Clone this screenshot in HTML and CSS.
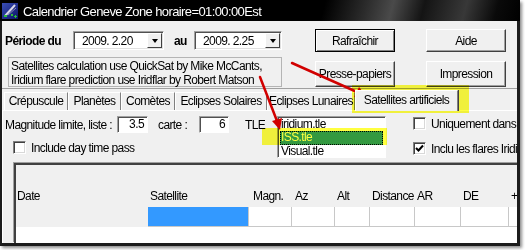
FILE: index.html
```html
<!DOCTYPE html>
<html lang="fr">
<head>
    <meta charset="UTF-8">
    <title>Calendrier Geneve</title>
    <link rel="stylesheet" href="styles.css">
</head>
<body>
<div class="shot">
    <div class="window">
        <div class="titlebar">
            <svg class="appicon" width="16" height="16" viewBox="0 0 16 16">
                <defs>
                    <linearGradient id="sky" x1="0" y1="0" x2="1" y2="1">
                        <stop offset="0" stop-color="#3a4fb8"/>
                        <stop offset="1" stop-color="#0c1466"/>
                    </linearGradient>
                </defs>
                <rect width="16" height="16" fill="url(#sky)"/>
                <path d="M3 13 L13 2" stroke="#d8d8e8" stroke-width="2"/>
                <path d="M6 12 L14 5" stroke="#8a8ab0" stroke-width="1"/>
                <rect x="2" y="12" width="3" height="2" fill="#2fbf3a"/>
                <rect x="9" y="11" width="2" height="2" fill="#2fbf3a"/>
                <rect x="12" y="13" width="3" height="1" fill="#2fbf3a"/>
                <rect x="13" y="12" width="1" height="3" fill="#2fbf3a"/>
            </svg>
            <span class="title">Calendrier Geneve Zone horaire=01:00:00Est</span>
        </div>
        <div class="client">
            <!-- période et boutons -->
            <div class="top">
                <div class="period">
                    <span class="lbl-bold period-lbl">Période du</span>
                    <div class="combo combo-from"><span class="combo-text">2009. 2.20</span><span class="drop"></span></div>
                    <span class="lbl-bold au-lbl">au</span>
                    <div class="combo combo-to"><span class="combo-text">2009. 2.25</span><span class="drop"></span></div>
                </div>
                <button class="btn btn-default">Rafraîchir</button>
                <button class="btn">Aide</button>
                <div class="note">Satellites calculation use QuickSat by Mike McCants,<br>Iridium flare prediction use Iridflar by Robert Matson</div>
                <button class="btn">Presse-papiers</button>
                <button class="btn">Impression</button>
            </div>

            <div class="tabs">
                <div class="tab tab-1">Crépuscule</div>
                <div class="tab tab-2">Planètes</div>
                <div class="tab tab-3">Comètes</div>
                <div class="tab tab-4">Eclipses Solaires</div>
                <div class="tab tab-5">Eclipses Lunaires</div>
                <div class="tab tab-active">Satellites artificiels</div>
            </div>

            <div class="panel">
                <div class="options">
                    <div class="opt-left">
                        <div class="mag-row">
                            <span class="mag-lbl">Magnitude limite, liste :</span>
                            <span class="field field-list">3.5</span>
                            <span class="carte-lbl">carte :</span>
                            <span class="field field-map">6</span>
                            <span class="tle-lbl">TLE</span>
                        </div>
                        <div class="check-row day-row"><span class="checkbox"></span>Include day time pass</div>
                    </div>
                    <div class="listbox">
                        <div class="item">iridium.tle</div>
                        <div class="item item-sel">ISS.tle</div>
                        <div class="item">Visual.tle</div>
                    </div>
                    <div class="opt-right">
                        <div class="check-row"><span class="checkbox"></span>Uniquement dans la liste</div>
                        <div class="check-row flares-row"><span class="checkbox checked"><svg width="9" height="9" viewBox="0 0 9 9"><path d="M1 4 L3.5 6.5 L8 1.5" fill="none" stroke="#000" stroke-width="2"/></svg></span>Inclu les flares Iridium</div>
                    </div>
                </div>

                <div class="table">
                    <div class="fixed span-all"></div>
                    <div class="fixed head head-date">Date</div>
                    <div class="fixed head">Satellite</div>
                    <div class="fixed head head-magn">Magn.</div>
                    <div class="fixed head head-az">Az</div>
                    <div class="fixed head">Alt</div>
                    <div class="fixed head">Distance</div>
                    <div class="fixed head">AR</div>
                    <div class="fixed head">DE</div>
                    <div class="fixed head">+/-</div>
                    <div class="fixed"></div>
                    <div class="cell cell-sel"></div>
                    <div class="cell"></div>
                    <div class="cell"></div>
                    <div class="cell"></div>
                    <div class="cell"></div>
                    <div class="cell"></div>
                    <div class="cell"></div>
                    <div class="cell"></div>
                </div>
            </div>
        </div>
    </div>

    <!-- annotations -->
    <div class="hl hl-tab"></div>
    <div class="hl hl-iss"></div>
    <svg class="arrows" width="525" height="250" viewBox="0 0 525 250">
        <g stroke="#d10000" stroke-width="2.5" stroke-linecap="round">
            <line x1="292" y1="63" x2="357" y2="92"/>
            <line x1="260" y1="77" x2="277" y2="121"/>
        </g>
        <g fill="#d10000">
            <polygon points="367,97 354,97 359,87"/>
            <polygon points="280,130 272,121 282,118"/>
        </g>
    </svg>
</div>
</body>
</html>
```

FILE: styles.css
```css
body {
    margin: 0;
    background: #fff;
    font-family: "Liberation Sans", Arial, sans-serif;
    font-size: 12px;
    letter-spacing: -0.6px;
    color: #000;
}
.shot {
    position: relative;
    width: 525px;
    height: 250px;
    overflow: hidden;
}
.window {
    width: 520px;
    height: 246px;
    box-shadow: 2px 2px 3px rgba(0, 0, 0, 0.45);
    overflow: hidden;
}
.titlebar {
    height: 21px;
    display: flex;
    align-items: center;
    gap: 5px;
    padding-left: 2px;
    background: linear-gradient(105deg, #000 0%, #000 62%, #2c2c2c 70%, #4a4a4a 75%, #141414 81%, #383838 89%, #0a0a0a 95%, #000 100%);
    color: #fff;
}
.title {
    font-size: 13px;
    padding-top: 1px;
    white-space: nowrap;
}
.client {
    height: 225px;
    box-sizing: border-box;
    background: #f0f0f0;
    border-left: 2px solid #1c1c1c;
    border-right: 3px solid #1c1c1c;
    border-bottom: 3px solid #1c1c1c;
    display: flex;
    flex-direction: column;
    overflow: hidden;
    white-space: nowrap;
}

/* haut */
.top {
    display: grid;
    grid-template-columns: 279px 80px 80px;
    grid-template-rows: 23px 26px;
    column-gap: 31px;
    row-gap: 9px;
    padding: 8px 0 1px 3px;
    border-bottom: 1px solid #a0a0a0;
}
.period {
    display: flex;
    align-items: center;
}
.period > * {
    flex-shrink: 0;
}
.lbl-bold {
    font-weight: bold;
}
.period-lbl {
    width: 68px;
}
.au-lbl {
    margin-left: 10px;
    width: 20px;
}
.combo {
    height: 19px;
    box-sizing: border-box;
    display: flex;
    align-items: center;
    justify-content: space-between;
    background: #fff;
    border: 1px solid;
    border-color: #a0a0a0 #fff #fff #a0a0a0;
    box-shadow: inset 1px 1px #505050, inset -1px -1px #e0e0e0;
}
.combo-from {
    width: 91px;
}
.combo-to {
    width: 88px;
}
.combo-text {
    padding-left: 8px;
}
.drop {
    width: 15px;
    height: 15px;
    box-sizing: border-box;
    margin-right: 1px;
    background: #f0f0f0;
    border: 1px solid;
    border-color: #fff #404040 #404040 #fff;
    display: flex;
    align-items: center;
    justify-content: center;
}
.drop::after {
    content: "";
    border-left: 3.5px solid transparent;
    border-right: 3.5px solid transparent;
    border-top: 4px solid #000;
}
.btn {
    font: inherit;
    letter-spacing: inherit;
    color: #000;
    background: #f0f0f0;
    padding: 0;
    border: 1px solid;
    border-color: #fff #404040 #404040 #fff;
    box-shadow: inset -1px -1px #a0a0a0;
}
.btn-default {
    border: 1px solid #000;
    box-shadow: inset 1px 1px #fff, inset -1px -1px #808080;
}
.note {
    align-self: start;
    margin: -4px 0 0 3px;
    width: 274px;
    height: 30px;
    box-sizing: border-box;
    border: 1px solid #b4b4b4;
    padding: 1px 0 0 2px;
    line-height: 14px;
}

/* onglets */
.tabs {
    height: 21px;
    display: flex;
    align-items: flex-end;
    padding-left: 2px;
}
.tab {
    flex-shrink: 0;
    height: 18px;
    box-sizing: border-box;
    border-top: 1px solid #fff;
    border-left: 1px solid #fff;
    border-right: 1px solid #808080;
    box-shadow: 1px 0 #404040;
    text-align: center;
    line-height: 17px;
}
.tab-1 { width: 64px; }
.tab-2 { width: 53px; }
.tab-3 { width: 54px; }
.tab-4 { width: 92px; }
.tab-5 { width: 88px; }
.tab-active {
    position: relative;
    z-index: 1;
    width: 103px;
    height: 21px;
    margin-bottom: -1px;
    background: #f0f0f0;
    line-height: 18px;
}
.panel {
    flex: 1;
    border-top: 1px solid #fff;
    border-left: 1px solid #fff;
    padding-top: 5px;
}
.options {
    display: flex;
    height: 42px;
}
.options > * {
    flex-shrink: 0;
}
.opt-left {
    width: 272px;
    padding-left: 2px;
}
.mag-row {
    display: flex;
    align-items: center;
    height: 17px;
}
.mag-row > * {
    flex-shrink: 0;
}
.mag-lbl { width: 112px; }
.carte-lbl { margin-left: 10px; width: 41px; }
.tle-lbl { margin-left: 16px; }
.field {
    height: 17px;
    box-sizing: border-box;
    background: #fff;
    border: 1px solid;
    border-color: #a0a0a0 #fff #fff #a0a0a0;
    box-shadow: inset 1px 1px #505050;
    text-align: right;
    padding-right: 3px;
    line-height: 15px;
}
.field-list { width: 31px; }
.field-map { width: 30px; }
.check-row {
    display: flex;
    align-items: center;
    gap: 5px;
    height: 13px;
}
.day-row {
    margin: 8px 0 0 8px;
}
.checkbox {
    flex-shrink: 0;
    width: 13px;
    height: 13px;
    box-sizing: border-box;
    background: #fff;
    border: 1px solid;
    border-color: #808080 #fff #fff #808080;
    box-shadow: inset 1px 1px #404040, inset -1px -1px #d8d8d8;
    display: flex;
    align-items: center;
    justify-content: center;
}
.listbox {
    width: 109px;
    height: 42px;
    box-sizing: border-box;
    background: #fff;
    border: 1px solid;
    border-color: #a0a0a0 #fff #fff #a0a0a0;
    box-shadow: inset 1px 1px #505050;
    padding: 1px 2px 0 2px;
}
.item {
    height: 13px;
    line-height: 13px;
    padding-left: 1px;
}
.item-sel {
    height: 14px;
    background: #3399ff;
    color: #fff;
    outline: 1px dotted #000;
    outline-offset: -1px;
}
.opt-right {
    margin-left: 27px;
    padding-top: 1px;
}
.flares-row {
    margin-top: 12px;
}

/* tableau */
.table {
    margin: 5px 0 0 11px;
    height: 80px;
    width: 600px;
    box-sizing: border-box;
    background: #fff;
    border-top: 2px solid #404040;
    border-left: 2px solid #404040;
    box-shadow: -1px -1px #a0a0a0;
    display: grid;
    grid-template-columns: 132px 101px 43px 43px 35px 45px 46px 48px 60px;
    grid-template-rows: 21px 21px 20px;
    align-content: start;
}
.fixed {
    background: #f0f0f0;
}
.span-all {
    grid-column: 1 / -1;
}
.head {
    line-height: 21px;
    padding-left: 2px;
}
.head-date { padding-left: 1px; }
.head-magn { padding-left: 4px; }
.head-az { padding-left: 3px; }
.cell {
    border-right: 1px solid #c8c8c8;
    border-bottom: 1px solid #c8c8c8;
}
.cell-sel {
    background: #3399ff;
}

/* annotations */
.hl {
    position: absolute;
    background: #ffff40;
    mix-blend-mode: multiply;
}
.hl-tab {
    left: 352px;
    top: 85px;
    width: 117px;
    height: 28px;
}
.hl-iss {
    left: 262px;
    top: 128px;
    width: 125px;
    height: 17px;
}
.arrows {
    position: absolute;
    left: 0;
    top: 0;
    pointer-events: none;
}
```
